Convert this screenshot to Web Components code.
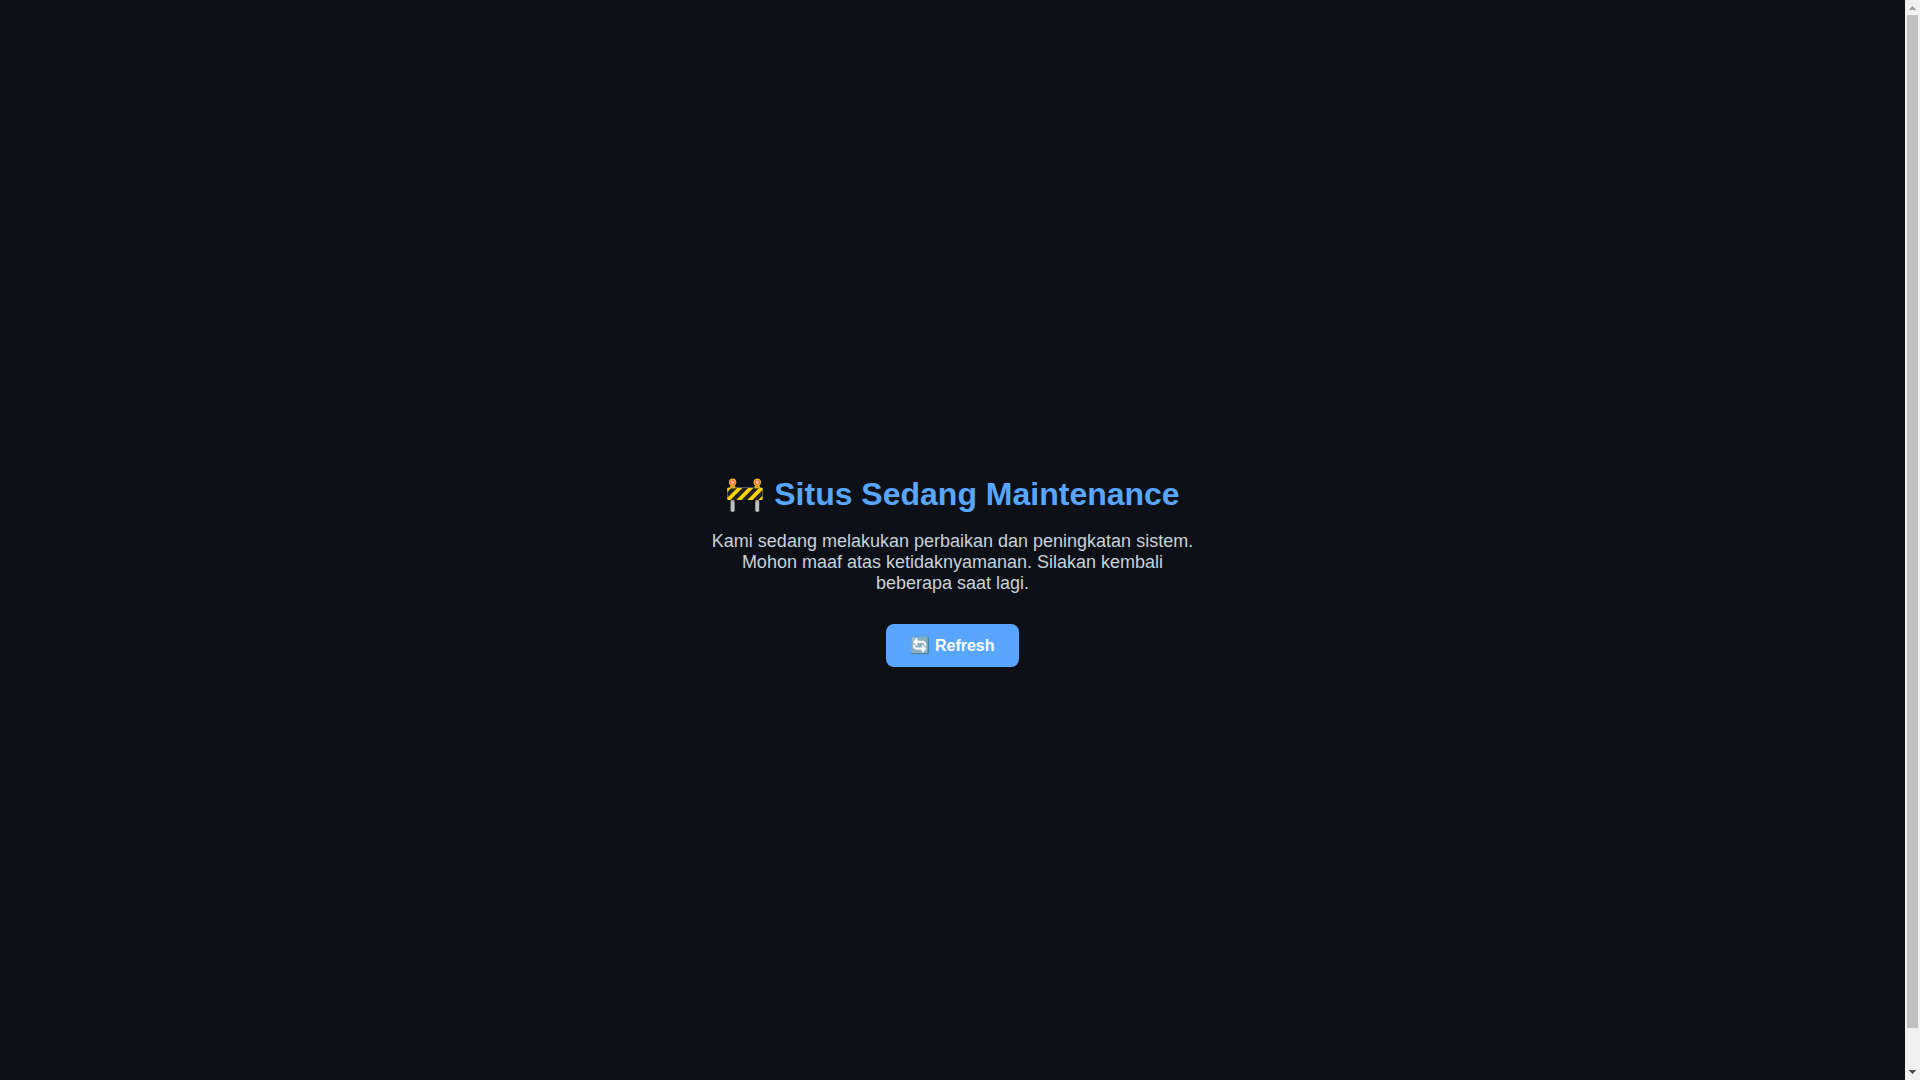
<!DOCTYPE html>
<html lang="id">
<head>
<meta charset="utf-8">
<title>Situs Sedang Maintenance</title>
<style>
html { scrollbar-width: none; }
body { margin: 0; display: flex; align-items: flex-start; background: #0d1117; color: #c9d1d9; font-family: "Liberation Sans", Arial, sans-serif; }
</style>
</head>
<body>
<maintenance-page>
  <span slot="title">🚧 Situs Sedang Maintenance</span>
  <span slot="message">Kami sedang melakukan perbaikan dan peningkatan sistem. Mohon maaf atas ketidaknyamanan. Silakan kembali beberapa saat lagi.</span>
  <refresh-button slot="action">🔄 Refresh</refresh-button>
</maintenance-page>
<page-scrollbar aria-hidden="true"></page-scrollbar>
<script>
class MaintenancePage extends HTMLElement {
  constructor() {
    super();
    this.attachShadow({ mode: "open" }).innerHTML = `
      <style>
        :host { flex: 1; display: flex; flex-direction: column; align-items: center; justify-content: center; min-height: 100vh; padding: 20px; text-align: center; }
        h1 { margin: 23px 0 18px; font-size: 32px; line-height: 37px; color: #58a6ff; }
        p { margin: 0 0 30px; max-width: 500px; font-size: 18px; line-height: 21px; }
      </style>
      <h1><slot name="title"></slot></h1>
      <p><slot name="message"></slot></p>
      <slot name="action"></slot>`;
  }
}
class RefreshButton extends HTMLElement {
  constructor() {
    super();
    this.attachShadow({ mode: "open" }).innerHTML = `
      <style>
        :host { display: block; }
        button { display: block; border: 0; border-radius: 8px; padding: 12px 24px; background: #58a6ff; color: #fff; font: bold 16px/19px "Liberation Sans", Arial, sans-serif; cursor: pointer; }
      </style>
      <button type="button"><slot></slot></button>`;
    this.shadowRoot.querySelector("button").addEventListener("click", () => location.reload());
  }
}
class PageScrollbar extends HTMLElement {
  constructor() {
    super();
    this.attachShadow({ mode: "open" }).innerHTML = `
      <style>
        :host { position: sticky; top: 0; display: flex; flex-direction: column; flex: none; width: 15px; height: 100vh; background: #f1f1f1; }
        svg { display: block; flex: none; width: 15px; height: 15px; }
        .thumb { flex: 27; margin: 0 2px; background: #c1c1c1; }
        .rest { flex: 1; }
      </style>
      <svg viewBox="0 0 15 15" shape-rendering="crispEdges"><path fill="#a3a3a3" d="M7 6h1v1h1v1h1v1h1v1H4V9h1V8h1V7h1z"/></svg>
      <div class="thumb"></div>
      <div class="rest"></div>
      <svg viewBox="0 0 15 15" shape-rendering="crispEdges"><path fill="#505050" d="M4 5h7v1h-1v1H9v1H8v1H7V8H6V7H5V6H4z"/></svg>`;
  }
}
customElements.define("maintenance-page", MaintenancePage);
customElements.define("refresh-button", RefreshButton);
customElements.define("page-scrollbar", PageScrollbar);
</script>
</body>
</html>
